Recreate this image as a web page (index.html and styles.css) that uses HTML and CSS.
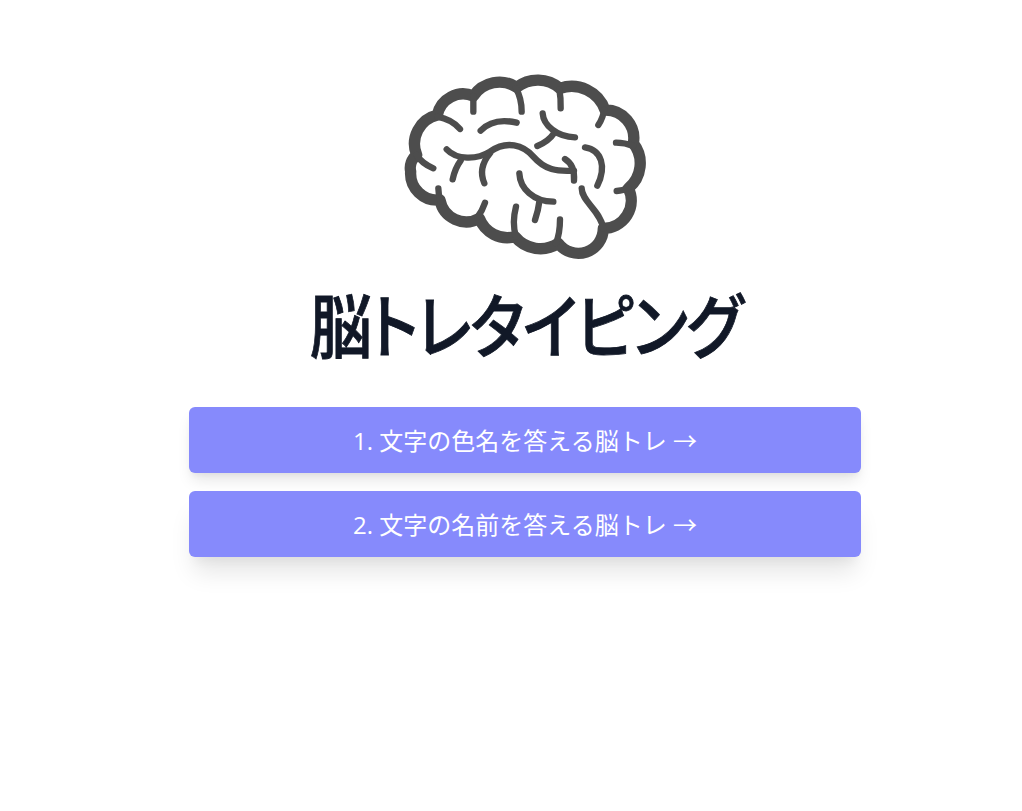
FILE: index.html
```html
<!DOCTYPE html>
<html lang="ja">
<head>
    <meta charset="UTF-8">
    <meta name="viewport" content="width=device-width, initial-scale=1.0">
    <title>脳トレタイピング</title>
    <link rel="stylesheet" href="styles.css">
</head>
<body>
    <main class="container">
        <svg class="logo" viewBox="0 0 810 630" aria-hidden="true">
            <path class="logo-outline" d="M80 285 A89 89 0 0 1 142 165 A79 79 0 0 1 250 108 A94 94 0 0 1 380 82 A103 103 0 0 1 510 85 A106 106 0 0 1 645 150 A85 85 0 0 1 730 250 A97 97 0 0 1 715 385 A83 83 0 0 1 640 505 A75 75 0 0 1 505 550 A98 98 0 0 1 375 530 A90 90 0 0 1 268 475 A80 80 0 0 1 150 420 A80 80 0 0 1 62 335 A50 50 0 0 1 80 285 Z"/>
            <g class="logo-folds">
                <path d="M130 325 Q95 310 80 285"/>
                <path d="M210 207 Q185 178 142 170"/>
                <path d="M250 108 L250 155"/>
                <path d="M378 85 Q395 115 395 155"/>
                <path d="M508 88 Q513 115 512 145"/>
                <path d="M625 195 Q640 172 642 150"/>
                <path d="M678 248 Q705 248 730 258"/>
                <path d="M680 393 Q700 392 715 382"/>
                <path d="M575 385 C575 425 630 450 640 505"/>
                <path d="M510 478 Q510 520 498 550"/>
                <path d="M378 440 Q365 490 378 530"/>
                <path d="M285 428 Q278 450 262 472"/>
                <path d="M145 385 Q145 405 152 425"/>
                <path d="M272 212 Q310 172 380 188"/>
                <path d="M458 160 C460 195 500 230 555 232"/>
                <path d="M442 258 Q475 245 492 220"/>
                <path d="M170 268 C200 300 260 300 300 275 C350 240 400 255 430 290 C465 330 500 335 552 332"/>
                <path d="M525 297 Q555 315 552 362"/>
                <path d="M188 358 Q195 325 212 302"/>
                <path d="M283 370 C270 340 275 310 300 280"/>
                <path d="M388 340 C390 385 430 425 490 425"/>
                <path d="M435 480 Q445 450 448 425"/>
                <path d="M585 262 C635 270 650 320 622 377"/>
            </g>
        </svg>
        <h1 class="title">脳トレタイピング</h1>
        <div class="menu">
            <a class="menu-btn" href="#">1. 文字の色名を答える脳トレ →</a>
            <a class="menu-btn menu-btn-last" href="#">2. 文字の名前を答える脳トレ →</a>
        </div>
    </main>
</body>
</html>
```

FILE: styles.css
```css
* {
    margin: 0;
    padding: 0;
    box-sizing: border-box;
}

body {
    font-family: "Open Sans", "Noto Sans CJK JP", sans-serif;
    background: white;
    min-height: 100vh;
    padding: 60px 0 0 28px;
    display: flex;
    justify-content: center;
}

.container {
    width: 672px;
    display: flex;
    flex-direction: column;
    align-items: center;
}

.logo {
    width: 270px;
    height: 210px;
    display: block;
    fill: none;
    stroke: #4d4d4d;
    stroke-linecap: round;
    stroke-linejoin: round;
}

.logo-outline {
    stroke-width: 34;
}

.logo-folds {
    stroke-width: 19;
}

.title {
    margin-top: 8px;
    color: #111827;
    font-size: 70px;
    line-height: 96px;
    font-weight: 500;
    font-feature-settings: "palt";
    letter-spacing: -1.8px;
    -webkit-text-stroke: 0.8px #111827;
    transform: scaleX(0.89);
}

.menu {
    width: 100%;
    margin-top: 33px;
    display: flex;
    flex-direction: column;
    gap: 18px;
}

.menu-btn {
    display: block;
    height: 66px;
    line-height: 68px;
    text-align: center;
    color: white;
    font-size: 24px;
    text-decoration: none;
    background: #868afc;
    border-radius: 6px;
    box-shadow: 0 10px 15px -3px rgba(0, 0, 0, 0.1), 0 4px 6px -2px rgba(0, 0, 0, 0.05);
}

.menu-btn-last {
    box-shadow: 0 20px 25px -5px rgba(0, 0, 0, 0.1), 0 10px 10px -5px rgba(0, 0, 0, 0.04);
}
```
